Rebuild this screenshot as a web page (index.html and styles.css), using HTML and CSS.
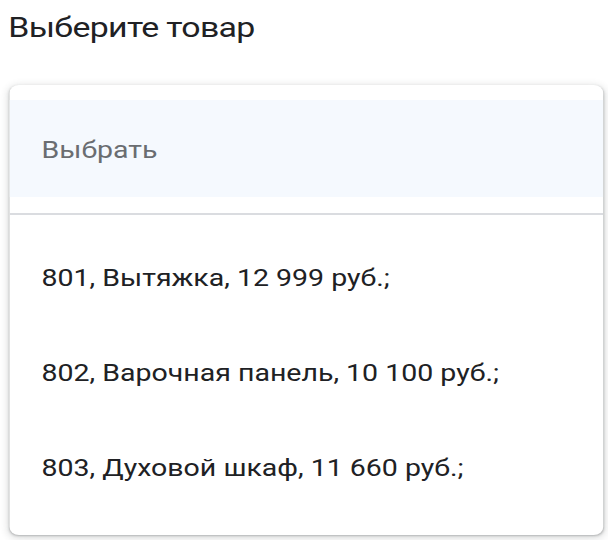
FILE: index.html
```html
<!DOCTYPE html>
<html lang="ru">
<head>
<meta charset="utf-8">
<title>Выберите товар</title>
<link rel="stylesheet" href="styles.css">
</head>
<body>
<div class="page">
  <h1 class="title">Выберите товар</h1>
  <div class="card">
    <div class="select-head">
      <div class="placeholder">Выбрать</div>
    </div>
    <div class="divider"></div>
    <ul class="options">
      <li class="option">801, Вытяжка, 12 999 руб.;</li>
      <li class="option">802, Варочная панель, 10 100 руб.;</li>
      <li class="option">803, Духовой шкаф, 11 660 руб.;</li>
    </ul>
  </div>
</div>
</body>
</html>
```
FILE: styles.css
```css
html, body {
  margin: 0;
  padding: 0;
  background: #ffffff;
}
body {
  font-family: Roboto, "Noto Sans", Arial, sans-serif;
  color: #202124;
  width: 608px;
  height: 540px;
  overflow: hidden;
}
/* the whole view is drawn 1.1875x wider than tall */
.page {
  width: 512px;
  box-sizing: border-box;
  padding: 0 4px 0 8px;
  transform: scaleX(1.1875);
  transform-origin: 0 0;
}
.title {
  margin: 0 0 0 -1px;
  padding-top: 8px;
  font-family: Roboto, "Open Sans", sans-serif;
  font-weight: 400;
  font-size: 28.5px;
  line-height: 40px;
  letter-spacing: -0.55px;
  color: #202124;
}
.card {
  margin-top: 37px;
  height: 450px;
  box-sizing: border-box;
  background: #fff;
  border-radius: 8px;
  box-shadow: 0 1px 2px rgba(60,64,67,.3), 0 2px 7px 2px rgba(60,64,67,.15);
  padding-top: 15px;
  overflow: hidden;
}
.select-head {
  height: 97px;
  background: #f5f9fe;
  display: flex;
  align-items: center;
  padding-left: 27px;
}
.placeholder {
  font-size: 24px;
  line-height: 28px;
  color: #6a6d71;
  padding-top: 2px;
}
.divider {
  margin-top: 16px;
  height: 2px;
  background: #dadce0;
}
.options {
  list-style: none;
  margin: 0;
  padding: 16px 0 0 0;
}
.option {
  font-size: 24px;
  line-height: 28px;
  padding: 33.4px 27px;
  color: #202124;
}
```
